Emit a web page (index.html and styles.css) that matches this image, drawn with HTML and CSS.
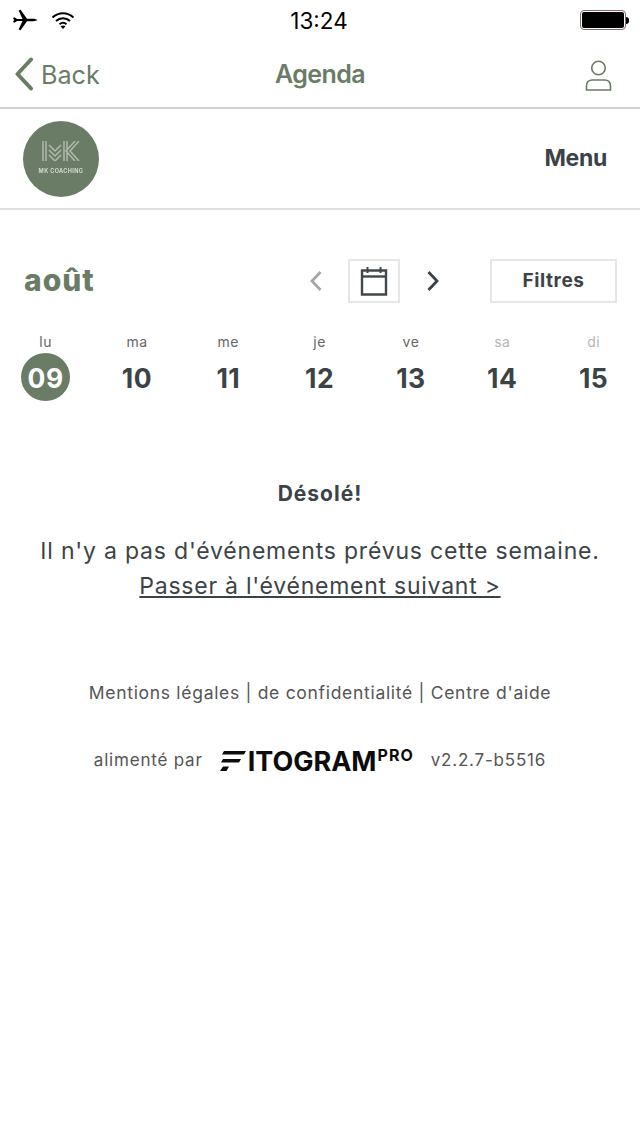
FILE: index.html
```html
<!DOCTYPE html>
<html lang="fr">
<head>
    <meta charset="UTF-8">
    <meta name="viewport" content="width=device-width, initial-scale=1.0">
    <title>Agenda</title>
    <link rel="stylesheet" href="styles.css">
</head>
<body>
    <div class="status-bar">
        <div class="status-left">
            <svg class="icon-plane" viewBox="0 0 26 24" width="26" height="24">
                <path d="M1 10.200l1.200-.9 3 1.700h5.300L6.600 2.400 8.600 1.800 15 10.800h6c2 0 4 .6 4 1.200s-2 1.200-4 1.200h-6L8.600 22.200l-2-.6 3.900-8.600H5.200l-3 1.700L1 13.800l1.300-1.800z" fill="#000"/>
            </svg>
            <svg class="icon-wifi" viewBox="0 0 24 18" width="24" height="18">
                <path d="M1.500 6.500C7.500 .8 16.500 .8 22.500 6.500M5 10c4-3.700 10-3.700 14 0M8.500 13.300c2-1.700 5-1.700 7 0" fill="none" stroke="#000" stroke-width="1.900"/>
                <path d="M12 18l-2.500-2.700c1.500-1 3.500-1 5 0z" fill="#000"/>
            </svg>
        </div>
        <div class="status-time">13:24</div>
        <div class="status-right">
            <div class="battery"><div class="battery-level"></div></div>
            <div class="battery-cap"></div>
        </div>
    </div>

    <nav class="navbar">
        <a class="nav-back">
            <svg viewBox="0 0 20 34" width="20" height="34">
                <path d="M17 2.500L3.500 17 17 31.500" fill="none" stroke="#6a7b66" stroke-width="4" stroke-linecap="round" stroke-linejoin="round"/>
            </svg>
            <span>Back</span>
        </a>
        <div class="nav-title">Agenda</div>
        <svg class="nav-user" viewBox="0 0 28 34" width="28" height="34">
            <circle cx="13.500" cy="11" r="6.800" fill="none" stroke="#6a7b66" stroke-width="1.600"/>
            <path d="M1.500 33v-4c0-4 2.500-6 6-6h12c3.500 0 6 2 6 6v4z" fill="none" stroke="#6a7b66" stroke-width="1.600"/>
        </svg>
    </nav>

    <header class="site-header">
        <div class="logo">
            <!-- striped monogram -->
            <svg class="logo-mark" viewBox="0 0 38 20" width="38" height="20">
                <path d="M1 0v20M4 0v20M7 4l6 6 6-6M7 9l6 6 6-6M7 14l6 6 6-6M22 0v20M25 0v20M37 0L28 10l9 10M33 0L24 10l9 10" fill="none" stroke="#cdd4ca" stroke-width="1.500"/>
            </svg>
            <div class="logo-name">MK COACHING</div>
        </div>
        <div class="menu-label">Menu</div>
    </header>

    <section class="toolbar">
        <h2 class="month">août</h2>
        <div class="week-nav">
            <svg viewBox="0 0 16 24" width="16" height="24">
                <path d="M12.500 3L4 12l8.500 9" fill="none" stroke="#a4a7a7" stroke-width="2.800"/>
            </svg>
            <button class="calendar-btn">
                <svg viewBox="0 0 28 30" width="28" height="30">
                    <path d="M2 4.500h24v24H2z" fill="none" stroke="#41484b" stroke-width="2.400"/>
                    <path d="M2 10.500h24" fill="none" stroke="#41484b" stroke-width="2.400"/>
                    <path d="M7.500 1v6M20.500 1v6" fill="none" stroke="#41484b" stroke-width="2"/>
                </svg>
            </button>
            <svg viewBox="0 0 16 24" width="16" height="24">
                <path d="M3.500 3L12 12l-8.500 9" fill="none" stroke="#3c4347" stroke-width="2.800"/>
            </svg>
        </div>
        <button class="filter-btn">Filtres</button>
    </section>

    <section class="week">
        <div class="day"><span class="day-name">lu</span><span class="day-num today">09</span></div>
        <div class="day"><span class="day-name">ma</span><span class="day-num">10</span></div>
        <div class="day"><span class="day-name">me</span><span class="day-num">11</span></div>
        <div class="day"><span class="day-name">je</span><span class="day-num">12</span></div>
        <div class="day"><span class="day-name">ve</span><span class="day-num">13</span></div>
        <div class="day weekend"><span class="day-name">sa</span><span class="day-num">14</span></div>
        <div class="day weekend"><span class="day-name">di</span><span class="day-num">15</span></div>
    </section>

    <section class="empty">
        <h3>Désolé!</h3>
        <p>Il n'y a pas d'événements prévus cette semaine.</p>
        <a class="next-link">Passer à l'événement suivant &gt;</a>
    </section>

    <footer class="footer">
        <div class="legal">Mentions légales | de confidentialité | Centre d'aide</div>
        <div class="powered">
            <span>alimenté par</span>
            <div class="brand">
                <svg viewBox="0 0 26 20" width="26" height="20">
                    <path d="M4 0h22l-2 3.500H2zM3 8h18l-2 3.500H1zM3 15.500h6L6.500 20H0z" fill="#0c0c0c"/>
                </svg>
                <span class="brand-name">ITOGRAM</span><span class="brand-pro">PRO</span>
            </div>
            <span>v2.2.7-b5516</span>
        </div>
    </footer>
</body>
</html>
```

FILE: styles.css
```css
body {
    font-family: 'Inter', sans-serif;
    background-color: #fff;
    color: #3c4347;
    margin: 0;
    width: 640px;
}

/* status bar */
.status-bar {
    height: 40px;
    display: flex;
    align-items: center;
    justify-content: space-between;
    padding: 0 10px 0 12px;
    color: #000;
    position: relative;
}
.status-left {
    display: flex;
    align-items: center;
    gap: 13px;
}
.status-time {
    position: absolute;
    left: 0;
    right: 2px;
    text-align: center;
    font-size: 22.500px;
}
.status-right {
    display: flex;
    align-items: center;
    width: 50px;
}
.battery {
    width: 46px;
    height: 20px;
    box-sizing: border-box;
    border: 1px solid #8c6a6a;
    border-radius: 4px;
    padding: 1px;
}
.battery-level {
    height: 100%;
    background-color: #000;
    border-radius: 2px;
}
.battery-cap {
    width: 3px;
    height: 7px;
    background-color: #000;
    border-radius: 0 3px 3px 0;
}

/* navigation bar */
.navbar {
    height: 67px;
    border-bottom: 2px solid #d0d0d0;
    display: flex;
    align-items: center;
    justify-content: space-between;
    padding: 0 27px 0 14px;
    position: relative;
    color: #6a7b66;
}
.nav-back {
    display: flex;
    align-items: center;
    gap: 7px;
    font-size: 25.200px;
    line-height: 36px;
}
.nav-back span {
    position: relative;
    top: 1px;
}
.nav-title {
    position: absolute;
    left: 0;
    right: 0;
    text-align: center;
    font-size: 25px;
    font-weight: 600;
    letter-spacing: -0.6px;
}
.nav-user {
    position: relative;
}

/* gym header */
.site-header {
    height: 99px;
    border-bottom: 2px solid #e0e0e0;
    display: flex;
    align-items: center;
    justify-content: space-between;
    padding: 0 33px 0 23px;
}
.logo {
    width: 76px;
    height: 76px;
    border-radius: 50%;
    background-color: #6a7b66;
    color: #d5dbd3;
    display: flex;
    flex-direction: column;
    align-items: center;
    justify-content: center;
}
.logo-mark {
    margin-top: -2px;
    filter: blur(0.7px);
    opacity: 0.7;
}
.logo-name {
    font-size: 5.500px;
    font-weight: 700;
    letter-spacing: 0.4px;
    margin-top: 7px;
    filter: blur(0.3px);
}
.menu-label {
    font-size: 23px;
    font-weight: 700;
    letter-spacing: -0.3px;
    margin-top: -2px;
}

/* month and week controls */
.toolbar {
    display: flex;
    align-items: center;
    justify-content: space-between;
    margin-top: 49px;
    height: 44px;
    padding: 0 23px 0 24px;
}
.month {
    margin: -2px 0 0;
    font-size: 30px;
    font-weight: 800;
    letter-spacing: 1px;
    color: #6a7b66;
    width: 283px;
}
.week-nav {
    display: flex;
    align-items: center;
    gap: 24px;
    margin-right: 48px;
}
.calendar-btn {
    width: 52px;
    height: 44px;
    background: none;
    border: 2px solid #e6e6e6;
    padding: 0;
    margin-right: 1px;
    display: flex;
    align-items: center;
    justify-content: center;
}
.filter-btn {
    width: 127px;
    height: 44px;
    background: none;
    border: 2px solid #e6e6e6;
    font-family: inherit;
    font-size: 19px;
    font-weight: 700;
    letter-spacing: 0.6px;
    color: #3c4347;
    padding: 0 0 2px;
}

.week {
    display: grid;
    grid-template-columns: repeat(7, 91.330px);
    margin-top: 28px;
}
.day {
    display: flex;
    flex-direction: column;
    align-items: center;
}
.day-name {
    font-size: 14px;
    line-height: 22px;
    letter-spacing: 0.5px;
    color: #666;
}
.day-num {
    font-size: 26.500px;
    font-weight: 700;
    line-height: 50px;
    letter-spacing: 0.5px;
    width: 49px;
    height: 48px;
    text-align: center;
}
.today {
    background-color: #6a7b66;
    color: #fff;
    border-radius: 50%;
}
.weekend .day-name {
    color: #b5b5b5;
}

/* no events message */
.empty {
    text-align: center;
    margin-top: 78px;
}
.empty h3 {
    margin: 0;
    font-size: 21px;
    font-weight: 700;
    letter-spacing: 1px;
    line-height: 30px;
}
.empty p {
    margin: 25px 0 0;
    font-size: 23px;
    letter-spacing: 0.8px;
    line-height: 35px;
}
.next-link {
    font-size: 23px;
    letter-spacing: 0.75px;
    line-height: 35px;
    text-decoration: underline;
}

.footer {
    text-align: center;
    color: #555;
    margin-top: 76px;
}
.legal {
    font-size: 17.500px;
    letter-spacing: 0.7px;
    line-height: 26px;
}
.powered {
    display: flex;
    align-items: center;
    justify-content: center;
    gap: 17px;
    font-size: 17px;
    letter-spacing: 0.8px;
    margin-top: 40px;
    height: 28px;
}
.brand {
    display: flex;
    align-items: center;
    color: #0c0c0c;
    letter-spacing: 0;
    margin-top: 2px;
}
.brand-name {
    font-size: 27px;
    font-weight: 700;
    margin-left: 2px;
}
.brand-pro {
    font-size: 16px;
    font-weight: 700;
    letter-spacing: 1px;
    margin-left: 1px;
    align-self: flex-start;
}
```
